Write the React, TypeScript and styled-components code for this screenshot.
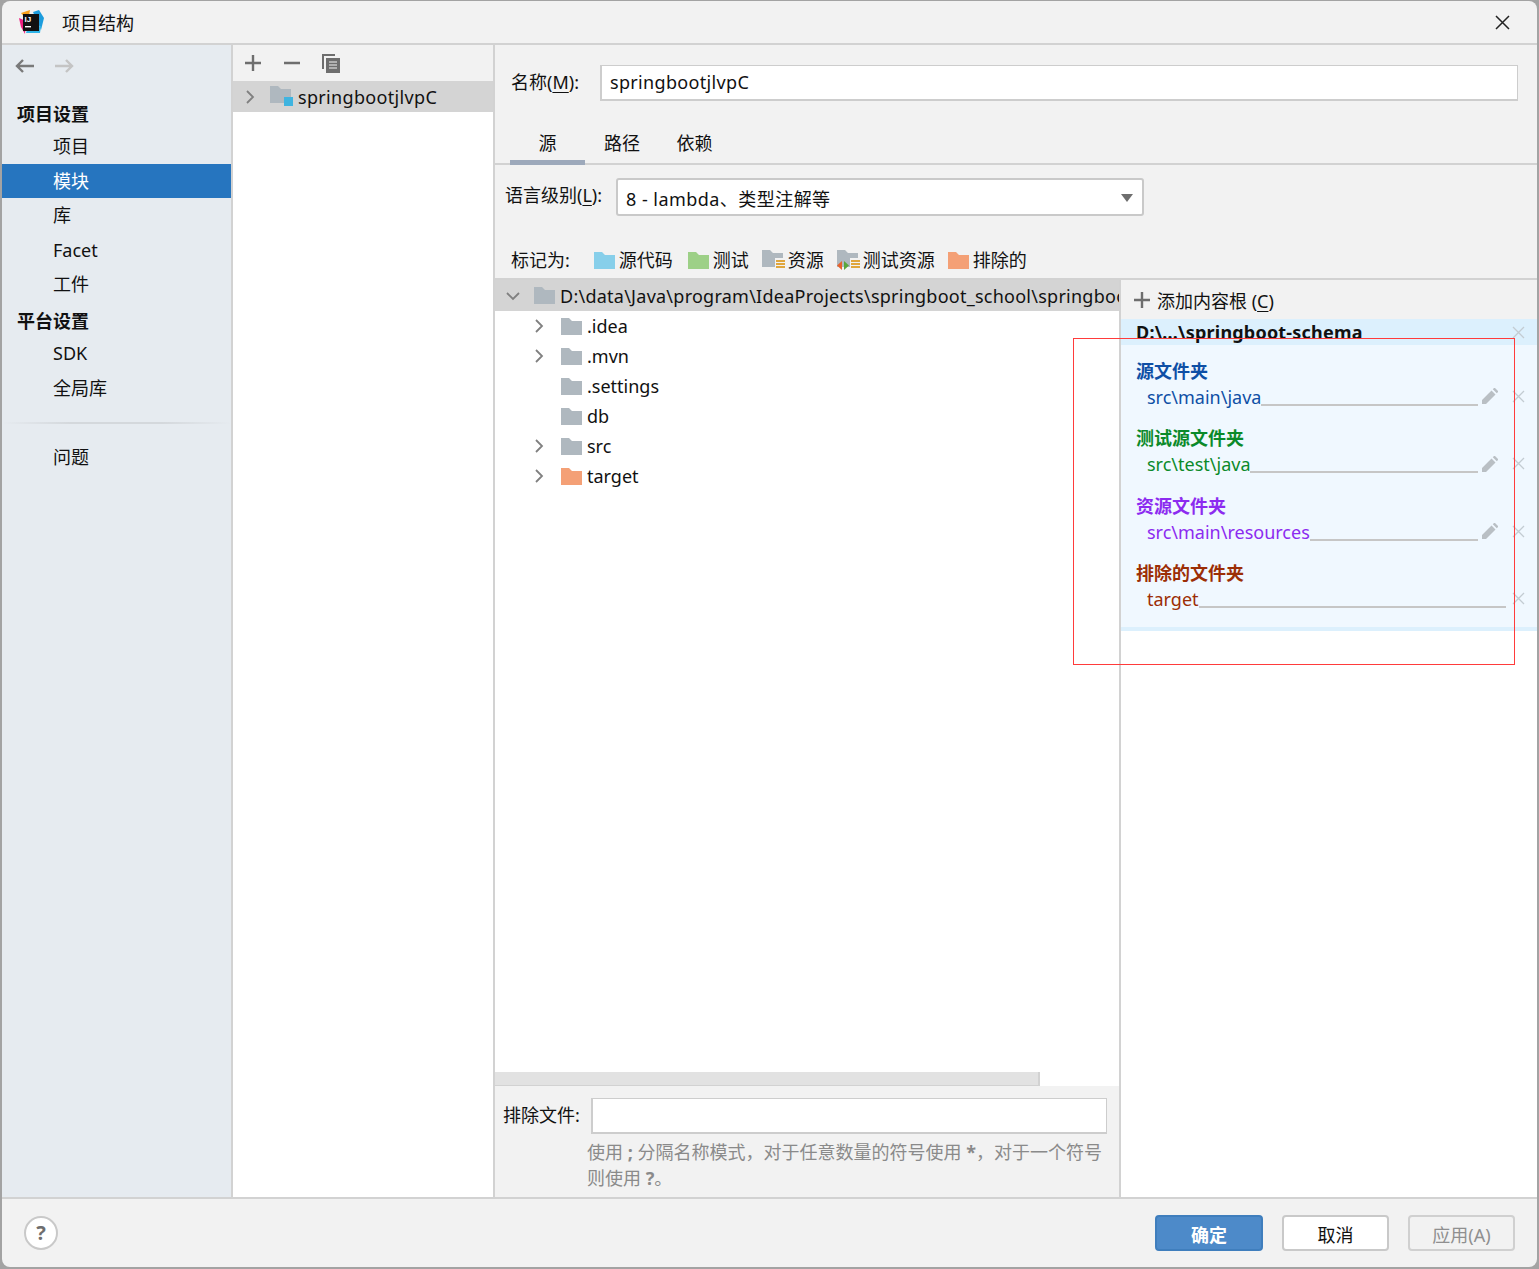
import React from "react";
import styled, { createGlobalStyle } from "styled-components";

const Global = createGlobalStyle`
  html, body { margin: 0; padding: 0; background: #a3a3a3; }
  * { box-sizing: border-box; }
  body { font-family: "Noto Sans", "Noto Sans CJK SC", sans-serif; font-size: 18px; color: #111; }
`;

const Page = styled.div`
  position: relative;
  width: 1539px;
  height: 1269px;
  padding: 1px 2px 2px 2px;
  overflow: hidden;
`;
const Dialog = styled.div`
  height: 100%;
  display: flex;
  flex-direction: column;
  background: #f2f2f2;
  border-radius: 8px;
  overflow: hidden;
`;
const TitleBar = styled.div`
  height: 44px;
  flex: none;
  display: flex;
  align-items: center;
  padding: 0 0 0 17px;
  border-bottom: 2px solid #d2d2d2;
  gap: 18px;
`;
const TitleText = styled.div`
  flex: 1;
`;
const CloseBtn = styled.div`
  width: 70px;
  display: flex;
  justify-content: center;
`;
const Body = styled.div`
  flex: 1;
  min-height: 0;
  display: flex;
`;
const Sidebar = styled.div`
  width: 229px;
  flex: none;
  background: #e6ebf0;
  display: flex;
  flex-direction: column;
  padding-top: 8px;
`;
const NavArrows = styled.div`
  display: flex;
  gap: 17px;
  padding-left: 12px;
  height: 26px;
  align-items: center;
  margin-bottom: 20px;
`;
const NavHead = styled.div<{ $top?: number }>`
  font-weight: 700;
  height: 30px;
  line-height: 30px;
  padding-left: 15px;
  margin-top: ${(p) => p.$top ?? 0}px;
`;
const NavItem = styled.div<{ $selected?: boolean }>`
  height: 34.6px;
  line-height: 35px;
  padding-left: 51px;
  background: ${(p) => (p.$selected ? "#2675bf" : "transparent")};
  color: ${(p) => (p.$selected ? "#fff" : "#111")};
`;
const NavRule = styled.div`
  height: 2px;
  margin: 17px 0 16px 0;
  background: linear-gradient(90deg, #e6ebf0, #d4d8dc 30%, #d4d8dc 70%, #e6ebf0);
`;
const Middle = styled.div`
  width: 264px;
  flex: none;
  background: #fff;
  border-left: 2px solid #d2d2d2;
  border-right: 2px solid #d2d2d2;
  display: flex;
  flex-direction: column;
`;
const ListToolbar = styled.div`
  height: 36px;
  background: #f2f2f2;
  display: flex;
  align-items: center;
  padding-left: 12px;
  gap: 19px;
`;
const MinusIcon = styled.svg`
  flex: none;
  margin-left: 4px;
`;
const CopySvg = styled.svg`
  flex: none;
  margin-left: 3px;
`;
const ListRow = styled.div`
  height: 31px;
  background: #d4d4d4;
  display: flex;
  align-items: center;
  padding-left: 10px;
  gap: 5px;
`;
const ListIcon = styled.svg`
  flex: none;
  margin-left: 8px;
`;
const ListName = styled.span`
  letter-spacing: 0.33px;
`;
const Main = styled.div`
  flex: 1;
  min-width: 0;
  display: flex;
  flex-direction: column;
`;
const NameRow = styled.div`
  height: 55px;
  flex: none;
  padding: 20px 19px 0 16px;
  display: flex;
  align-items: flex-start;
  gap: 21px;
`;
const FieldLabel = styled.div`
  line-height: 34px;
  flex: none;
`;
const TextField = styled.div<{ $wide?: boolean }>`
  flex: 1;
  height: 36px;
  background: #fff;
  border: 2px solid #cdcdcd;
  border-width: 1px 1px 2px 2px;
  line-height: 32px;
  padding-left: 8px;
  letter-spacing: ${(p) => (p.$wide ? "0.33px" : "0")};
`;
const Tabs = styled.div`
  height: 65px;
  flex: none;
  display: flex;
  align-items: flex-end;
  padding: 0 0 0 15px;
  border-bottom: 2px solid #d2d2d2;
`;
const Tab = styled.div<{ $active?: boolean; $w: number }>`
  width: ${(p) => p.$w}px;
  height: 37px;
  margin-bottom: -2px;
  text-align: center;
  line-height: 31px;
  border-bottom: 5px solid ${(p) => (p.$active ? "#9da9bb" : "transparent")};
`;
const LangRow = styled.div`
  height: 52px;
  flex: none;
  padding: 13px 0 0 10px;
  display: flex;
  align-items: flex-start;
  gap: 14px;
`;
const Select = styled.div`
  width: 528px;
  height: 38px;
  background: #fff;
  border: 2px solid #c9c9c9;
  border-radius: 3px;
  display: flex;
  align-items: center;
  justify-content: space-between;
  padding: 1px 9px 0 8px;
`;
const SelectText = styled.span`
  letter-spacing: 0.45px;
`;
const Caret = styled.div`
  width: 0;
  height: 0;
  border-left: 6.5px solid transparent;
  border-right: 6.5px solid transparent;
  border-top: 8px solid #6e6e6e;
`;
const MarkRow = styled.div`
  height: 63px;
  flex: none;
  display: flex;
  align-items: flex-end;
  padding: 0 0 3px 16px;
  border-bottom: 2px solid #d2d2d2;
`;
const MarkLabel = styled.div`
  margin-right: 24px;
  line-height: 29px;
`;
const MarkItem = styled.div<{ $mr?: number }>`
  display: flex;
  align-items: center;
  gap: 4px;
  margin-right: ${(p) => p.$mr ?? 13}px;
  line-height: 29px;
`;
const ResSvg = styled.svg`
  flex: none;
  margin-right: -1px;
`;
const Split = styled.div`
  flex: 1;
  min-height: 0;
  display: flex;
`;
const TreePane = styled.div`
  width: 626px;
  flex: none;
  display: flex;
  flex-direction: column;
  background: #fff;
  border-right: 2px solid #d2d2d2;
`;
const Tree = styled.div`
  flex: 1;
  min-height: 0;
  overflow: hidden;
`;
const TreeRow = styled.div<{ $root?: boolean }>`
  height: ${(p) => (p.$root ? 31 : 30)}px;
  display: flex;
  align-items: center;
  white-space: nowrap;
  padding-left: ${(p) => (p.$root ? 8 : 34)}px;
  background: ${(p) => (p.$root ? "#d4d4d4" : "transparent")};
  gap: 5px;
  letter-spacing: ${(p) => (p.$root ? "0.25px" : "0")};
`;
const ChevronSlot = styled.div<{ $root?: boolean }>`
  width: 19px;
  flex: none;
  display: flex;
  justify-content: center;
  margin-right: ${(p) => (p.$root ? 7 : 8)}px;
`;
const HScroll = styled.div`
  height: 14px;
  flex: none;
  margin-right: 79px;
  background: #e2e2e2;
  border-right: 2px solid #d2d2d2;
  border-bottom: 1px solid #d2d2d2;
`;
const Exclude = styled.div`
  height: 111px;
  flex: none;
  background: #f2f2f2;
  padding: 12px 12px 0 8px;
`;
const ExcludeRow = styled.div`
  display: flex;
  align-items: flex-start;
  gap: 11px;
`;
const Hint = styled.div`
  margin: 5px 0 0 84px;
  color: #8a8a8a;
  line-height: 26px;
  width: 530px;
`;
const RootPane = styled.div`
  flex: 1;
  min-width: 0;
  display: flex;
  flex-direction: column;
  background: #fff;
`;
const AddRoot = styled.div`
  height: 39px;
  flex: none;
  background: #f2f2f2;
  display: flex;
  align-items: center;
  padding: 1px 0 0 13px;
  gap: 7px;
`;
const RootHead = styled.div`
  height: 26px;
  flex: none;
  background: #dcf0fd;
  display: flex;
  align-items: center;
  justify-content: space-between;
  padding: 0 12px 0 15px;
  font-weight: 700;
  line-height: 26px;
  letter-spacing: 0.2px;
`;
const RootBody = styled.div`
  height: 282px;
  flex: none;
  background: #f0f8ff;
  padding: 12.6px 12px 0 15px;
`;
const RootFoot = styled.div`
  height: 4px;
  flex: none;
  background: #dcf0fd;
`;
const GroupTitle = styled.div<{ $c: string }>`
  color: ${(p) => p.$c};
  font-weight: 700;
  line-height: 26px;
`;
const GroupRow = styled.div<{ $c: string }>`
  height: 41.5px;
  color: ${(p) => p.$c};
  display: flex;
  align-items: flex-start;
  padding-left: 11px;
  line-height: 27px;
`;
const Leader = styled.div`
  flex: 1;
  height: 22px;
  border-bottom: 2px solid #c6c6c6;
`;
const RowIcons = styled.div`
  display: flex;
  align-items: center;
  height: 25px;
  flex: none;
`;
const PencilSlot = styled.div`
  width: 28px;
  display: flex;
  padding-left: 4px;
`;
const XSlot = styled.div`
  width: 19px;
  display: flex;
  justify-content: flex-end;
`;
const Footer = styled.div`
  height: 70px;
  flex: none;
  border-top: 2px solid #d2d2d2;
  display: flex;
  align-items: center;
  padding: 0 22px;
  gap: 19px;
`;
const Help = styled.div`
  width: 34px;
  height: 34px;
  border-radius: 50%;
  background: #fff;
  border: 2px solid #c9c9c9;
  color: #6e6e6e;
  font-weight: 700;
  font-size: 20px;
  text-align: center;
  line-height: 29px;
  margin-right: auto;
`;
const Button = styled.div<{ $kind?: "primary" | "disabled" }>`
  width: ${(p) => (p.$kind === "primary" ? 108 : 107)}px;
  height: 36px;
  border-radius: 4px;
  text-align: center;
  line-height: 36px;
  border: 2px solid
    ${(p) => (p.$kind === "primary" ? "#3f7ebd" : p.$kind === "disabled" ? "#d0d0d0" : "#c9c9c9")};
  background: ${(p) => (p.$kind === "primary" ? "#4d8ac9" : p.$kind === "disabled" ? "#f2f2f2" : "#fff")};
  color: ${(p) => (p.$kind === "primary" ? "#fff" : p.$kind === "disabled" ? "#8f8f8f" : "#111")};
  font-weight: ${(p) => (p.$kind === "primary" ? 700 : 400)};
`;
const RedFrame = styled.div`
  position: absolute;
  left: 1073px;
  top: 338px;
  width: 442px;
  height: 327px;
  border: 1px solid #ff3b3b;
  pointer-events: none;
`;
const Mn = styled.span`
  text-decoration: underline;
  text-underline-offset: 3px;
`;
const IconSvg = styled.svg`
  flex: none;
`;

const Folder = ({ c = "#afb8bf" }: { c?: string }) => (
  <IconSvg width="21" height="17" viewBox="0 0 21 17">
    <path d="M0 0H8L11 3H21V17H0Z" fill={c} />
  </IconSvg>
);
const Chevron = ({ open }: { open?: boolean }) => (
  <IconSvg width="14" height="14" viewBox="0 0 14 14">
    <path d={open ? "M1 4L7 10L13 4" : "M4 1L10 7L4 13"} fill="none" stroke="#808080" strokeWidth="1.8" />
  </IconSvg>
);
const ResFolder = ({ test }: { test?: boolean }) => (
  <ResSvg width="23" height="21" viewBox="0 0 23 21">
    <path d="M0 0H8L11 3H21V8H13V17H0Z" fill="#afb8bf" />
    <g fill="#e0a63c">
      <rect x="14" y="10" width="9" height="2" />
      <rect x="14" y="13" width="9" height="2" />
      <rect x="14" y="16" width="9" height="2" />
    </g>
    {test && (
      <>
        <path d="M5 11V20L0 15.5Z" fill="#e8622c" />
        <path d="M7 11V20L12 15.5Z" fill="#5aa63c" />
      </>
    )}
  </ResSvg>
);
const Cross = () => (
  <IconSvg width="13" height="13" viewBox="0 0 13 13">
    <path d="M1 1L12 12M12 1L1 12" stroke="#c3ccd2" strokeWidth="1.3" />
  </IconSvg>
);
const Pencil = () => (
  <IconSvg width="16" height="16" viewBox="0 0 16 16">
    <path d="M0 16V12L9.5 2.5L13.5 6.5L4 16ZM10.8 1.2L12 0H13L16 3V4L14.8 5.2Z" fill="#b9bfc4" />
  </IconSvg>
);
const Plus = () => (
  <IconSvg width="16" height="16" viewBox="0 0 16 16">
    <path d="M8 0V16M0 8H16" stroke="#6e6e6e" strokeWidth="2.4" />
  </IconSvg>
);
const Minus = () => (
  <MinusIcon width="16" height="16" viewBox="0 0 16 16">
    <path d="M0 8H16" stroke="#6e6e6e" strokeWidth="2.4" />
  </MinusIcon>
);
const CopyIcon = () => (
  <CopySvg width="18" height="19" viewBox="0 0 18 19">
    <path d="M0 0H13V2H2V15H0Z" fill="#6e6e6e" />
    <path d="M4 4H18V19H4Z" fill="#6e6e6e" />
    <path d="M7 8H15M7 11H15M7 14H15" stroke="#f2f2f2" strokeWidth="1.2" />
  </CopySvg>
);
const Arrow = ({ c, dir }: { c: string; dir: "l" | "r" }) => (
  <svg width="22" height="16" viewBox="0 0 22 16">
    <path
      d={dir === "l" ? "M20 8H3M9 2L3 8L9 14" : "M2 8H19M13 2L19 8L13 14"}
      fill="none"
      stroke={c}
      strokeWidth="2.4"
    />
  </svg>
);
const Logo = () => (
  <IconSvg width="25" height="24" viewBox="0 0 25 24">
    <path d="M2 3L11 0L9 12Z" fill="#f9a11b" />
    <path d="M14 2L20 0L25 8L22 20Z" fill="#1c9cdd" />
    <path d="M0 8L7 11L6 24L2 17Z" fill="#ed1f7f" />
    <path d="M8 20L22 16L21 23H7Z" fill="#2fb4e8" />
    <rect x="4" y="4" width="16" height="17" fill="#111" />
    <text x="5.5" y="12" fill="#fff" fontSize="8" fontWeight="700" fontFamily="Liberation Sans">
      IJ
    </text>
    <rect x="6" y="16" width="6" height="1.4" fill="#fff" />
  </IconSvg>
);

const groups = [
  { title: "源文件夹", path: "src\\main\\java", c: "#0e4fa5", edit: true },
  { title: "测试源文件夹", path: "src\\test\\java", c: "#0b8a2a", edit: true },
  { title: "资源文件夹", path: "src\\main\\resources", c: "#8c2bf0", edit: true },
  { title: "排除的文件夹", path: "target", c: "#9c2e05", edit: false },
];
const tree = [
  { n: ".idea", ch: true },
  { n: ".mvn", ch: true },
  { n: ".settings", ch: false },
  { n: "db", ch: false },
  { n: "src", ch: true },
  { n: "target", ch: true, c: "#f4a076" },
];

export default function App() {
  return (
    <Page>
      <Global />
      <Dialog>
        <TitleBar>
          <Logo />
          <TitleText>项目结构</TitleText>
          <CloseBtn>
            <svg width="15" height="15" viewBox="0 0 15 15">
              <path d="M1 1L14 14M14 1L1 14" stroke="#222" strokeWidth="1.5" />
            </svg>
          </CloseBtn>
        </TitleBar>
        <Body>
          <Sidebar>
            <NavArrows>
              <Arrow c="#7a7a7a" dir="l" />
              <Arrow c="#c4c4c4" dir="r" />
            </NavArrows>
            <NavHead>项目设置</NavHead>
            <NavItem>项目</NavItem>
            <NavItem $selected>模块</NavItem>
            <NavItem>库</NavItem>
            <NavItem>Facet</NavItem>
            <NavItem>工件</NavItem>
            <NavHead $top={4}>平台设置</NavHead>
            <NavItem>SDK</NavItem>
            <NavItem>全局库</NavItem>
            <NavRule />
            <NavItem>问题</NavItem>
          </Sidebar>
          <Middle>
            <ListToolbar>
              <Plus />
              <Minus />
              <CopyIcon />
            </ListToolbar>
            <ListRow>
              <Chevron />
              <ListIcon width="23" height="21" viewBox="0 0 23 21">
                <path d="M0 0H8L11 3H21V17H0Z" fill="#afb8bf" />
                <rect x="14" y="11" width="9" height="9" fill="#3fb4e0" />
              </ListIcon>
              <ListName>springbootjlvpC</ListName>
            </ListRow>
          </Middle>
          <Main>
            <NameRow>
              <FieldLabel>
                名称(<Mn>M</Mn>):
              </FieldLabel>
              <TextField $wide>springbootjlvpC</TextField>
            </NameRow>
            <Tabs>
              <Tab $active $w={75}>源</Tab>
              <Tab $w={74}>路径</Tab>
              <Tab $w={71}>依赖</Tab>
            </Tabs>
            <LangRow>
              <FieldLabel>
                语言级别(<Mn>L</Mn>):
              </FieldLabel>
              <Select>
                <SelectText>8 - lambda、类型注解等</SelectText>
                <Caret />
              </Select>
            </LangRow>
            <MarkRow>
              <MarkLabel>标记为:</MarkLabel>
              <MarkItem $mr={15}>
                <Folder c="#87cfea" />
                源代码
              </MarkItem>
              <MarkItem>
                <Folder c="#9dd087" />
                测试
              </MarkItem>
              <MarkItem>
                <ResFolder />
                资源
              </MarkItem>
              <MarkItem>
                <ResFolder test />
                测试资源
              </MarkItem>
              <MarkItem>
                <Folder c="#f4a076" />
                排除的
              </MarkItem>
            </MarkRow>
            <Split>
              <TreePane>
                <Tree>
                  <TreeRow $root>
                    <ChevronSlot $root>
                      <Chevron open />
                    </ChevronSlot>
                    <Folder />
                    D:\data\Java\program\IdeaProjects\springboot_school\springboot-schema
                  </TreeRow>
                  {tree.map((t) => (
                    <TreeRow key={t.n}>
                      <ChevronSlot>{t.ch && <Chevron />}</ChevronSlot>
                      <Folder c={t.c} />
                      {t.n}
                    </TreeRow>
                  ))}
                </Tree>
                <HScroll />
                <Exclude>
                  <ExcludeRow>
                    <FieldLabel>排除文件:</FieldLabel>
                    <TextField />
                  </ExcludeRow>
                  <Hint>
                    使用 <b>;</b> 分隔名称模式，对于任意数量的符号使用 <b>*</b>，对于一个符号则使用 <b>?</b>。
                  </Hint>
                </Exclude>
              </TreePane>
              <RootPane>
                <AddRoot>
                  <Plus />
                  <span>
                    添加内容根 (<Mn>C</Mn>)
                  </span>
                </AddRoot>
                <RootHead>
                  D:\...\springboot-schema
                  <Cross />
                </RootHead>
                <RootBody>
                  {groups.map((g) => (
                    <div key={g.title}>
                      <GroupTitle $c={g.c}>{g.title}</GroupTitle>
                      <GroupRow $c={g.c}>
                        {g.path}
                        <Leader />
                        <RowIcons>
                          {g.edit && (
                            <PencilSlot>
                              <Pencil />
                            </PencilSlot>
                          )}
                          <XSlot>
                            <Cross />
                          </XSlot>
                        </RowIcons>
                      </GroupRow>
                    </div>
                  ))}
                </RootBody>
                <RootFoot />
              </RootPane>
            </Split>
          </Main>
        </Body>
        <Footer>
          <Help>?</Help>
          <Button $kind="primary">确定</Button>
          <Button>取消</Button>
          <Button $kind="disabled">应用(A)</Button>
        </Footer>
      </Dialog>
      <RedFrame />
    </Page>
  );
}
